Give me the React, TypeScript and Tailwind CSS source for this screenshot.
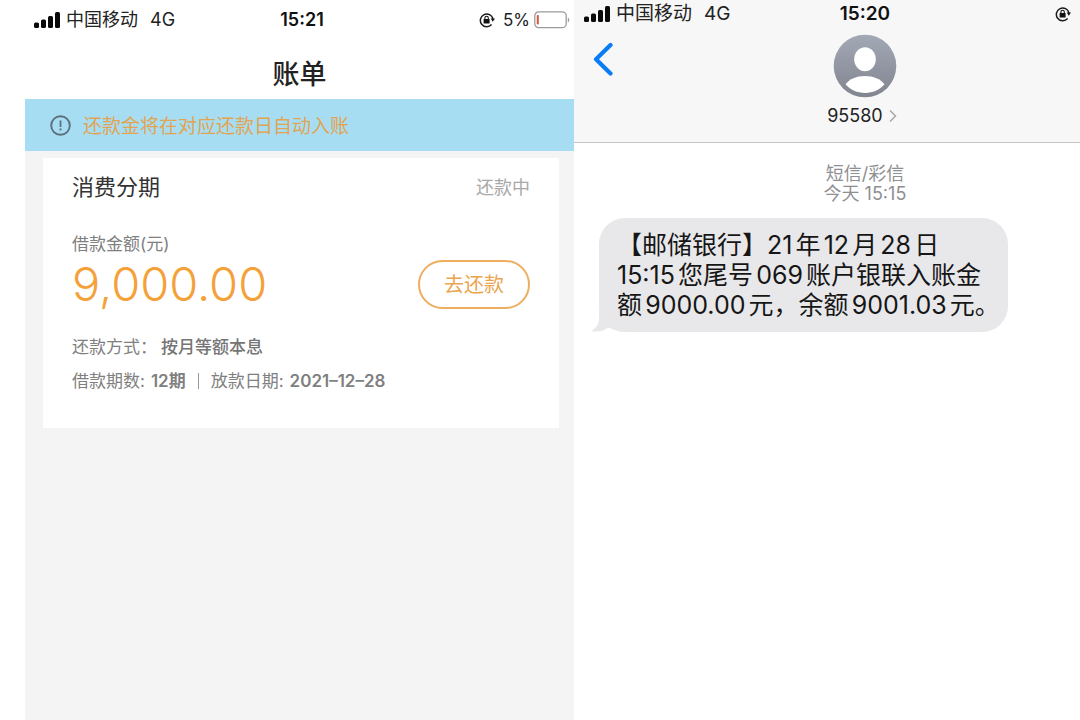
import clsx from 'clsx';
import { ChevronRight } from 'lucide-react';

function SignalBars() {
  return (
    <svg width="26" height="16" viewBox="0 0 26 16" fill="#0a0a0a" aria-hidden="true">
      <rect x="0" y="10.5" width="5" height="5.5" rx="1.5" />
      <rect x="7" y="7.5" width="5" height="8.5" rx="1.5" />
      <rect x="14" y="4" width="5" height="12" rx="1.5" />
      <rect x="21" y="0" width="5" height="16" rx="1.5" />
    </svg>
  );
}

function RotationLock() {
  return (
    <svg width="16" height="16" viewBox="0 0 16 16" fill="none" aria-hidden="true">
      <path d="M14 7A6.4 6.4 0 1 0 12.6 12.6" stroke="#1a1a1a" strokeWidth="1.5" />
      <path d="M11.6 6.4H16l-2.2 3.4z" fill="#1a1a1a" />
      <rect x="4.6" y="7" width="6" height="4.5" rx="0.6" fill="#111" />
      <path d="M5.9 7V5.9a1.7 1.7 0 0 1 3.4 0V7" stroke="#111" strokeWidth="1.1" />
    </svg>
  );
}

function Battery() {
  return (
    <svg width="36" height="18" viewBox="0 0 36 18" fill="none" aria-hidden="true">
      <rect x="0.8" y="0.8" width="31.4" height="15.9" rx="4" stroke="#9b9b9b" strokeWidth="1.3" />
      <rect x="2.8" y="4" width="2" height="9.6" rx="0.8" fill="#e0533f" />
      <path d="M33.8 6.4c2 .8 2 4 0 4.8z" fill="#9b9b9b" />
    </svg>
  );
}

function Avatar() {
  return (
    <svg width="64" height="64" viewBox="0 0 64 64" aria-hidden="true">
      <defs>
        <linearGradient id="avatar-bg" x1="0" y1="0" x2="0" y2="1">
          <stop offset="0" stopColor="#a3a8b6" />
          <stop offset="1" stopColor="#81858f" />
        </linearGradient>
      </defs>
      <circle cx="32" cy="32" r="31.3" fill="url(#avatar-bg)" />
      <ellipse cx="32" cy="25.3" rx="10.8" ry="12" fill="#fff" />
      <path d="M12.5 50.3C16.5 45 23.5 42 32 42s15.5 3 19.5 8.3C46.5 55.8 40 59 32 59s-14.5-3.2-19.5-8.7z" fill="#fff" />
    </svg>
  );
}

type StatusBarProps = {
  time: string;
  battery?: string;
  className?: string;
  endClassName?: string;
};

function StatusBar({ time, battery, className, endClassName }: StatusBarProps) {
  return (
    <div className={clsx('grid grid-cols-[1fr_auto_1fr] items-center leading-6 text-[#222]', className)}>
      <div className="flex items-center gap-1.5">
        <SignalBars />
        <span>中国移动</span>
        <span className="ml-1.5">4G</span>
      </div>
      <span className="font-semibold text-[#111]">{time}</span>
      <div className={clsx('flex items-center justify-end', endClassName)}>
        <RotationLock />
        {battery && (
          <>
            <span className="ml-2 mr-1 text-[17px]">{battery}</span>
            <Battery />
          </>
        )}
      </div>
    </div>
  );
}

function BillScreen() {
  return (
    <section className="flex flex-col bg-[#f4f4f4]">
      <header className="bg-white pb-1.5">
        <StatusBar time="15:21" battery="5%" className="h-10 pl-[9px] pr-1 text-[18px]" />
        <h1 className="mt-4 text-center text-[27px] leading-[37px] font-medium text-[#222]">账单</h1>
      </header>

      <div className="flex h-[52px] items-center gap-3 bg-[#a7ddf3] pl-[25px] text-[19px] text-[#e0a552]">
        <svg width="21" height="21" viewBox="0 0 21 21" fill="none" aria-hidden="true">
          <circle cx="10.5" cy="10.5" r="9.3" stroke="#5c6f7b" strokeWidth="1.9" />
          <path d="M10.5 5.5v6.5M10.5 13.5v2" stroke="#5c6f7b" strokeWidth="1.8" />
        </svg>
        <p className="pt-1">还款金将在对应还款日自动入账</p>
      </div>

      <article className="mr-[15px] ml-[18px] mt-[7px] h-[270px] bg-white px-[29px] pt-3 text-[#808080]">
        <div className="flex items-center justify-between">
          <h2 className="text-[22px] leading-[34px] text-[#333]">消费分期</h2>
          <span className="text-[18px] text-[#a8a8a8]">还款中</span>
        </div>

        <div className="mt-7 flex items-center justify-between">
          <div>
            <p className="text-[17px] leading-6">借款金额(元)</p>
            <p className="text-[47px] leading-[56px] font-[350] text-[#f5a13a]">9,000.00</p>
          </div>
          <button
            type="button"
            className="mt-6 h-[49px] w-[112px] rounded-full border-2 border-[#edae60] pt-0.5 text-[20px] text-[#eaa550]"
          >
            去还款
          </button>
        </div>

        <p className="mt-[18px] text-[17px] leading-[34px]">
          还款方式：<span className="ml-1 font-medium text-[#757575]">按月等额本息</span>
        </p>
        <p className="flex items-center text-[17px] leading-[34px]">
          借款期数:
          <span className="ml-1.5 font-semibold">12期</span>
          <span className="mx-3 h-4 w-px bg-[#999]" />
          放款日期:
          <span className="ml-1.5 font-semibold">2021–12–28</span>
        </p>
      </article>
    </section>
  );
}

// The phone is wider than its column, so its right edge runs out of view.
function MessageScreen() {
  return (
    <section className="overflow-hidden bg-white">
      <div className="w-[115%]">
        <header className="h-[143px] border-b border-[#c6c6c6] bg-[#f7f7f7]">
          <StatusBar time="15:20" className="h-[27px] px-2.5 text-[19px]" endClassName="pr-[75px]" />
          <div className="grid grid-cols-[1fr_auto_1fr] items-start px-[19px] pt-[7px]">
            <button type="button" aria-label="返回" className="mt-2 justify-self-start">
              <svg width="20" height="34" viewBox="0 0 20 34" fill="none" aria-hidden="true">
                <path d="M17.500 3L3 17.200L17.500 31.500" stroke="#0a7cf5" strokeWidth="4.2" strokeLinecap="round" strokeLinejoin="round" />
              </svg>
            </button>
            <button type="button" className="flex flex-col items-center">
              <Avatar />
              <span className="mt-1.5 flex items-center text-[18px] leading-6 text-[#222]">
                95580
                <ChevronRight className="size-5 text-[#aaa]" strokeWidth={2} />
              </span>
            </button>
          </div>
        </header>

        <main className="px-[25px] pt-[21px]">
          <div className="text-center text-[18px] leading-5 text-[#8f8f92]">
            <p>短信/彩信</p>
            <p>今天 15:15</p>
          </div>
          <div className="relative mt-3.5 w-fit rounded-[26px] bg-[#e8e8ea] py-3 pr-2 pl-[18px] text-[25px] leading-[30px] text-[#161616]">
            <svg className="absolute bottom-0 -left-2" width="30" height="22" viewBox="0 0 30 22" fill="#e8e8ea" aria-hidden="true">
              <path d="M8 0v8c0 6-3 10-8 13.5 7 .5 13-.5 17-4L30 22V0z" />
            </svg>
            <p className="relative [text-autospace:normal]">
              【邮储银行】21年12月28日
              <br />
              15:15您尾号069账户银联入账金
              <br />
              额9000.00元，余额9001.03元。
            </p>
          </div>
        </main>
      </div>
    </section>
  );
}

export default function App() {
  return (
    <div className="grid min-h-screen grid-cols-[549fr_506fr] bg-white pl-[25px] font-['Inter','Noto_Sans_CJK_SC',sans-serif]">
      <BillScreen />
      <MessageScreen />
    </div>
  );
}
